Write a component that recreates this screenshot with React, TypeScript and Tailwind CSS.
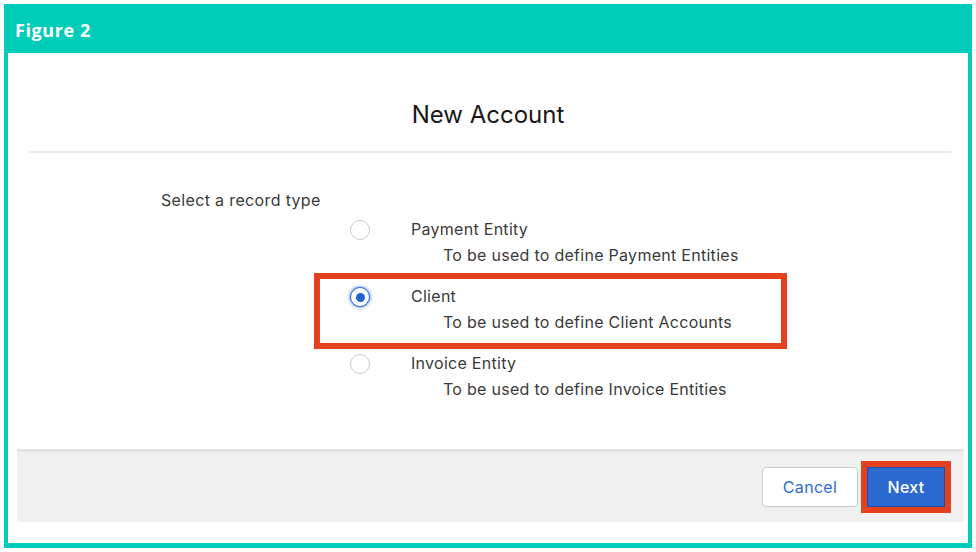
import React from "react";

const body = { fontFamily: "Inter, 'Liberation Sans', sans-serif" };

function Radio({ checked }: { checked?: boolean }) {
  if (checked) {
    return (
      <span className="mt-[3px] flex h-[20px] w-[20px] shrink-0 items-center justify-center rounded-full border-[1.5px] border-[#1f63d1] bg-white shadow-[0_0_3px_1px_rgba(60,120,230,0.55)]">
        <span className="h-[9px] w-[9px] rounded-full bg-[#1f63d1]" />
      </span>
    );
  }
  return <span className="mt-[3px] block h-[20px] w-[20px] shrink-0 rounded-full border border-[#c9c9c9] bg-white" />;
}

function Row({ label, desc, checked }: { label: string; desc: string; checked?: boolean }) {
  return (
    <div className="relative flex items-start">
      <Radio checked={checked} />
      <div className="ml-[41px] flex flex-col tracking-[0.28px]">
        <span className="h-[24px] text-[16px] leading-[24px] text-[#3a3a3a]">{label}</span>
        <span className="mt-[2px] ml-[32px] h-[24px] text-[16px] leading-[24px] text-[#3a3a3a]">{desc}</span>
      </div>
      {checked && (
        <span className="pointer-events-none absolute left-[-36px] top-[-11px] h-[76px] w-[473px] border-[6px] border-[#e5411f]" />
      )}
    </div>
  );
}

export default function App() {
  return (
    <div className="h-[552px] w-[976px] bg-white pl-[4px] pt-[4px]">
      <div className="flex h-[544px] w-[968px] flex-col bg-[#00ccba] px-[4px] pb-[5px]">
        <div className="h-[49px] shrink-0 pl-[7px] pt-[14px]">
          <span
            className="text-[18px] font-bold leading-[24px] tracking-[0.6px] text-white"
            style={{ fontFamily: "'Open Sans', 'Liberation Sans', sans-serif" }}
          >
            Figure 2
          </span>
        </div>
        <div className="flex flex-1 flex-col bg-white" style={body}>
          <div className="pt-[46px] text-center text-[24px] leading-[32px] text-[#181818]">New Account</div>
          <div className="ml-[21px] mr-[17px] mt-[20px] h-[2px] bg-[#ebebeb]" />
          <div className="pl-[153px] pt-[35px]">
            <div className="h-[24px] text-[16px] leading-[24px] tracking-[0.35px] text-[#3a3a3a]">Select a record type</div>
            <div className="ml-[189px] mt-[5px] flex flex-col gap-[17px]">
              <Row label="Payment Entity" desc="To be used to define Payment Entities" />
              <Row label="Client" desc="To be used to define Client Accounts" checked />
              <Row label="Invoice Entity" desc="To be used to define Invoice Entities" />
            </div>
          </div>
          <div className="mb-[21px] ml-[9px] mr-[4px] mt-auto flex h-[73px] items-center justify-end gap-[9px] border-t-[3px] border-[#e3e3e3] bg-[#f0f0f0] pr-[19px]">
            <button className="h-[40px] w-[96px] rounded-[4px] border border-[#c9c9c9] bg-white text-[16px] tracking-[0.3px] text-[#2d6ccf]">
              Cancel
            </button>
            <button className="h-[40px] w-[78px] border border-[#1d4fa6] bg-[#2c69cf] text-[16px] font-medium tracking-[0.3px] text-white outline-[6px] outline-solid outline-[#e5411f]">
              Next
            </button>
          </div>
        </div>
      </div>
    </div>
  );
}
